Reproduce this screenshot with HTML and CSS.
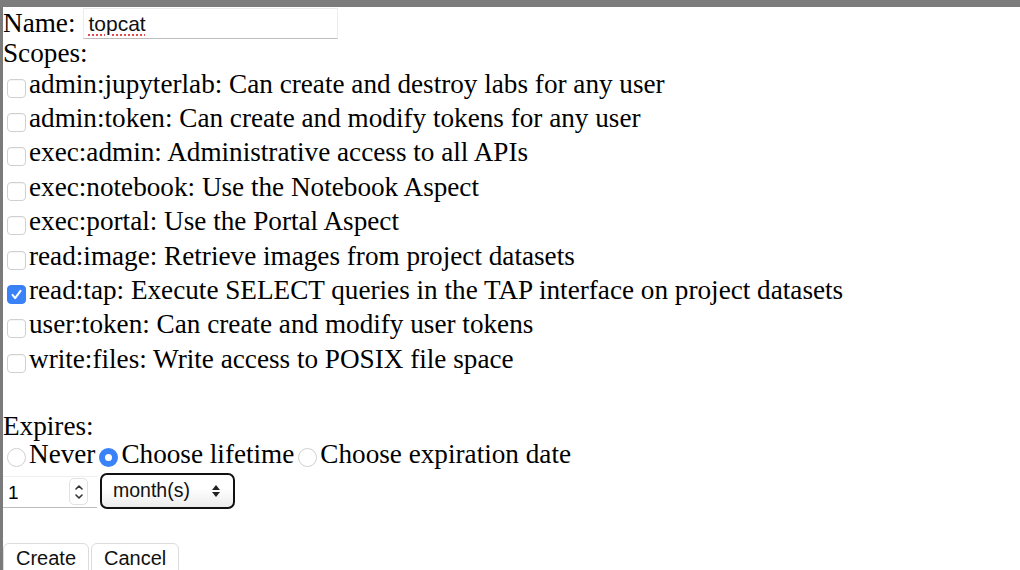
FILE: index.html
```html
<!DOCTYPE html>
<html>
<head>
<meta charset="utf-8">
<link rel="stylesheet" href="styles.css">
</head>
<body>
<div class="frame">
  <div class="edge"></div>
  <form class="form">
    <div class="name-row">
      <label class="lbl">Name:</label>
      <input class="name-input" type="text" value="topcat">
    </div>
    <div class="line">Scopes:</div>
    <div class="scopes">
      <label class="scope"><input type="checkbox" class="cb">admin:jupyterlab: Can create and destroy labs for any user</label>
      <label class="scope"><input type="checkbox" class="cb">admin:token: Can create and modify tokens for any user</label>
      <label class="scope"><input type="checkbox" class="cb">exec:admin: Administrative access to all APIs</label>
      <label class="scope"><input type="checkbox" class="cb">exec:notebook: Use the Notebook Aspect</label>
      <label class="scope"><input type="checkbox" class="cb">exec:portal: Use the Portal Aspect</label>
      <label class="scope"><input type="checkbox" class="cb">read:image: Retrieve images from project datasets</label>
      <label class="scope"><input type="checkbox" class="cb" checked>read:tap: Execute SELECT queries in the TAP interface on project datasets</label>
      <label class="scope"><input type="checkbox" class="cb">user:token: Can create and modify user tokens</label>
      <label class="scope"><input type="checkbox" class="cb">write:files: Write access to POSIX file space</label>
    </div>
    <div class="line expires">Expires:</div>
    <div class="radios">
      <label class="radio"><input type="radio" name="exp" class="rb">Never</label>
      <label class="radio"><input type="radio" name="exp" class="rb" checked>Choose lifetime</label>
      <label class="radio"><input type="radio" name="exp" class="rb">Choose expiration date</label>
    </div>
    <div class="lifetime">
      <div class="num">
        <span class="num-val">1</span>
        <span class="spin">
          <svg width="12" height="24" viewBox="0 0 12 24"><path d="M3 9 L6 6 L9 9" fill="none" stroke="#333" stroke-width="1.6" stroke-linecap="round" stroke-linejoin="round"/><path d="M3 15 L6 18 L9 15" fill="none" stroke="#333" stroke-width="1.6" stroke-linecap="round" stroke-linejoin="round"/></svg>
        </span>
      </div>
      <div class="select">
        <span>month(s)</span>
        <svg width="10" height="16" viewBox="0 0 10 16"><path d="M1 7 L5 2 L9 7 Z" fill="#222"/><path d="M1 9 L5 14 L9 9 Z" fill="#222"/></svg>
      </div>
    </div>
    <div class="buttons">
      <button type="button" class="btn">Create</button>
      <button type="button" class="btn">Cancel</button>
    </div>
  </form>
</div>
</body>
</html>
```
FILE: styles.css
```css
html, body {
  margin: 0;
  padding: 0;
  background: #ffffff;
  overflow: hidden;
}
.frame {
  display: flex;
  height: 570px;
  border-top: 7px solid #7c7c7c;
  box-sizing: border-box;
}
.edge {
  width: 3px;
  flex: none;
  background: #7a7a7a;
}
.form {
  flex: 1;
  font-family: "Liberation Serif", "Times New Roman", serif;
  font-size: 27.2px;
  color: #000;
  display: flex;
  flex-direction: column;
}
.name-row {
  display: flex;
  align-items: center;
  height: 34px;
}
.lbl {
  margin-right: 8px;
}
.name-input {
  width: 255px;
  height: 31px;
  box-sizing: border-box;
  margin-top: 1px;
  border: 1px solid #ececec;
  border-bottom: 1px solid #bdbdbd;
  font-family: "Liberation Sans", Arial, sans-serif;
  font-size: 21px;
  padding: 0 0 0 4px;
  text-decoration: underline dotted #e05050;
  text-underline-offset: 4px;
  outline: none;
  color: #111;
}
.line {
  height: 28px;
  line-height: 28px;
}
.scopes {
  display: flex;
  flex-direction: column;
}
.scope {
  display: flex;
  align-items: center;
  height: 34.4px;
  white-space: nowrap;
}
.cb {
  appearance: none;
  -webkit-appearance: none;
  width: 19px;
  height: 19px;
  margin: 8px 3px 0 4px;
  border: 1px solid #d0d0d0;
  border-radius: 4px;
  background: #fff;
  box-sizing: border-box;
  flex: none;
  box-shadow: inset 0 1px 1px rgba(0,0,0,0.04);
}
.cb:checked {
  border-color: #3a82f7;
  background: #3a82f7 url("data:image/svg+xml,%3Csvg xmlns='http://www.w3.org/2000/svg' viewBox='0 0 19 19'%3E%3Cpath d='M5 10 L8 13.5 L14 5.5' fill='none' stroke='white' stroke-width='2.3' stroke-linecap='round' stroke-linejoin='round'/%3E%3C/svg%3E") no-repeat center / 100% 100%;
}
.expires {
  margin-top: 34px;
  height: 30px;
  line-height: 30px;
}
.radios {
  display: flex;
  align-items: center;
  height: 28px;
  white-space: nowrap;
}
.radio {
  display: flex;
  align-items: center;
}
.rb {
  appearance: none;
  -webkit-appearance: none;
  width: 19px;
  height: 19px;
  margin: 6px 3px 0 4px;
  border: 1px solid #d0d0d0;
  border-radius: 50%;
  background: #fff;
  box-sizing: border-box;
  flex: none;
}
.rb:checked {
  border: 6px solid #3a82f7;
  background: #fff;
}
.lifetime {
  display: flex;
  align-items: center;
  margin-top: 4px;
  height: 36px;
}
.num {
  width: 94px;
  height: 32px;
  box-sizing: border-box;
  border-top: 1px solid #efefef;
  border-bottom: 1px solid #bdbdbd;
  display: flex;
  align-items: center;
  font-family: "Liberation Sans", Arial, sans-serif;
  font-size: 19px;
  padding-left: 5px;
  margin-top: 2px;
}
.num-val {
  flex: 1;
  padding-top: 2px;
}
.spin {
  width: 19px;
  height: 27px;
  border: 1px solid #e2e2e2;
  border-radius: 5px;
  display: flex;
  align-items: center;
  justify-content: center;
  margin-right: 9px;
  box-sizing: border-box;
}
.select {
  margin-left: 3px;
  width: 135px;
  height: 36px;
  box-sizing: border-box;
  border: 2px solid #111;
  border-radius: 7px;
  background: linear-gradient(#ffffff, #ffffff 40%, #ececec);
  display: flex;
  align-items: center;
  justify-content: space-between;
  padding: 0 12px 0 11px;
  font-family: "Liberation Sans", Arial, sans-serif;
  font-size: 19.5px;
  color: #111;
}
.buttons {
  display: flex;
  gap: 2px;
  margin-top: 34px;
}
.btn {
  height: 34px;
  padding: 0 12px 2px;
  background: #fff;
  border: 1px solid #dcdcdc;
  border-radius: 6px;
  font-family: "Liberation Sans", Arial, sans-serif;
  font-size: 20px;
  color: #111;
}
```
